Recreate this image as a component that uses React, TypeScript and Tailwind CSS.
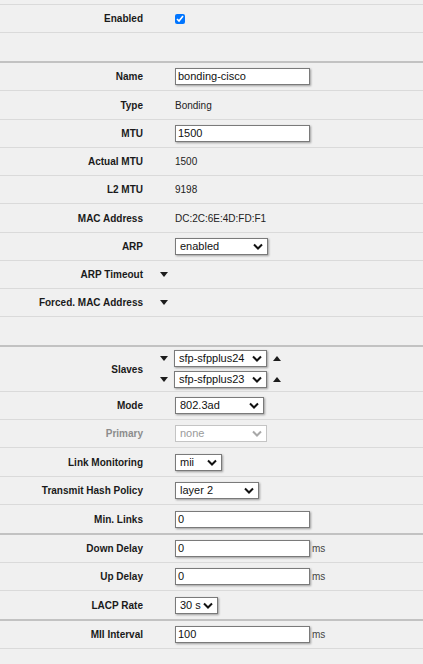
import type { ReactNode } from 'react';

const font = { fontFamily: '"Liberation Sans", Arial, sans-serif' };

function Tri({ up = false }: { up?: boolean }) {
  return (
    <svg width="8" height="5" viewBox="0 0 8 5" className="block">
      <polygon points={up ? '0,5 8,5 4,0' : '0,0 8,0 4,5'} fill="#1c1c1c" />
    </svg>
  );
}

function Chevron({ disabled = false }: { disabled?: boolean }) {
  return (
    <svg width="10" height="7" viewBox="0 0 10 7" className="block">
      <polyline
        points="1,1.5 5,5.5 9,1.5"
        fill="none"
        stroke={disabled ? '#a8a8a8' : '#111'}
        strokeWidth="2"
      />
    </svg>
  );
}

function Select({ value, w, disabled = false }: { value: string; w: string; disabled?: boolean }) {
  return (
    <div
      className={`flex h-[17px] items-center justify-between bg-white pl-[4px] pr-[4px] ${w} ${
        disabled
          ? 'border border-[#c4c4c4] text-[#9a9a9a]'
          : 'border border-[#7a7a7a] text-[#111] shadow-[1px_1px_2px_rgba(0,0,0,0.35)]'
      }`}
    >
      <span className="text-[11px] leading-none">{value}</span>
      <Chevron disabled={disabled} />
    </div>
  );
}

function Input({ value, unit }: { value: string; unit?: boolean }) {
  return (
    <div className="flex items-center">
      <div className="flex h-[17px] w-[135px] items-center border border-[#7a7a7a] bg-white pl-[2px] text-[11px] leading-none text-[#111] shadow-[1px_1px_2px_rgba(0,0,0,0.35)]">
        {value}
      </div>
      {unit && <span className="ml-[2px] text-[10px] text-[#444]">ms</span>}
    </div>
  );
}

function Row({
  label,
  h,
  thick = false,
  muted = false,
  tri = false,
  children,
}: {
  label?: string;
  h: string;
  thick?: boolean;
  muted?: boolean;
  tri?: boolean;
  children?: ReactNode;
}) {
  return (
    <div
      className={`flex items-center ${h} ${
        thick ? 'border-b-2 border-[#c2c2c2]' : 'border-b border-[#dadada]'
      }`}
    >
      <div className={`w-[143px] text-right text-[10px] font-bold ${muted ? 'text-[#8c8c8c]' : 'text-[#1a1a1a]'}`}>
        {label}
      </div>
      <div className="flex w-[32px] pl-[17px]">{tri && <Tri />}</div>
      {children}
    </div>
  );
}

function Text({ children }: { children: ReactNode }) {
  return <span className="text-[10px] text-[#222]">{children}</span>;
}

export default function App() {
  return (
    <div className="min-h-[664px] w-[423px] bg-[#f0f0f0]" style={font}>
      <div className="h-[5px] border-b border-[#dadada]" />

      <Row label="Enabled" h="h-[28px]">
        <input
          type="checkbox"
          checked
          readOnly
          className="m-0 h-[10px] w-[10px] accent-[#0075ff]"
        />
      </Row>
      <Row h="h-[30px]" thick />

      <Row label="Name" h="h-[28px]">
        <Input value="bonding-cisco" />
      </Row>
      <Row label="Type" h="h-[29px]">
        <Text>Bonding</Text>
      </Row>
      <Row label="MTU" h="h-[28px]">
        <Input value="1500" />
      </Row>
      <Row label="Actual MTU" h="h-[28px]">
        <Text>1500</Text>
      </Row>
      <Row label="L2 MTU" h="h-[28px]">
        <Text>9198</Text>
      </Row>
      <Row label="MAC Address" h="h-[29px]">
        <Text>DC:2C:6E:4D:FD:F1</Text>
      </Row>
      <Row label="ARP" h="h-[28px]">
        <Select value="enabled" w="w-[93px]" />
      </Row>
      <Row label="ARP Timeout" h="h-[28px]" tri />
      <Row label="Forced. MAC Address" h="h-[28px]" tri />
      <Row h="h-[30px]" thick />

      {/* Slaves */}
      <div className="flex h-[45px] items-center border-b border-[#dadada]">
        <div className="w-[143px] text-right text-[10px] font-bold text-[#1a1a1a]">Slaves</div>
        <div className="flex flex-col gap-[4px]">
          {['sfp-sfpplus24', 'sfp-sfpplus23'].map((s) => (
            <div key={s} className="flex items-center">
              <div className="flex w-[31px] pl-[17px]">
                <Tri />
              </div>
              <Select value={s} w="w-[93px]" />
              <div className="ml-[6px]">
                <Tri up />
              </div>
            </div>
          ))}
        </div>
      </div>

      <Row label="Mode" h="h-[28px]">
        <Select value="802.3ad" w="w-[89px]" />
      </Row>
      <Row label="Primary" h="h-[28px]" muted>
        <Select value="none" w="w-[92px]" disabled />
      </Row>
      <Row label="Link Monitoring" h="h-[29px]">
        <Select value="mii" w="w-[47px]" />
      </Row>
      <Row label="Transmit Hash Policy" h="h-[28px]">
        <Select value="layer 2" w="w-[84px]" />
      </Row>
      <Row label="Min. Links" h="h-[30px]" thick>
        <Input value="0" />
      </Row>
      <Row label="Down Delay" h="h-[28px]">
        <Input value="0" unit />
      </Row>
      <Row label="Up Delay" h="h-[28px]">
        <Input value="0" unit />
      </Row>
      <Row label="LACP Rate" h="h-[30px]" thick>
        <Select value="30 s" w="w-[43px]" />
      </Row>
      <Row label="MII Interval" h="h-[28px]">
        <Input value="100" unit />
      </Row>
    </div>
  );
}
